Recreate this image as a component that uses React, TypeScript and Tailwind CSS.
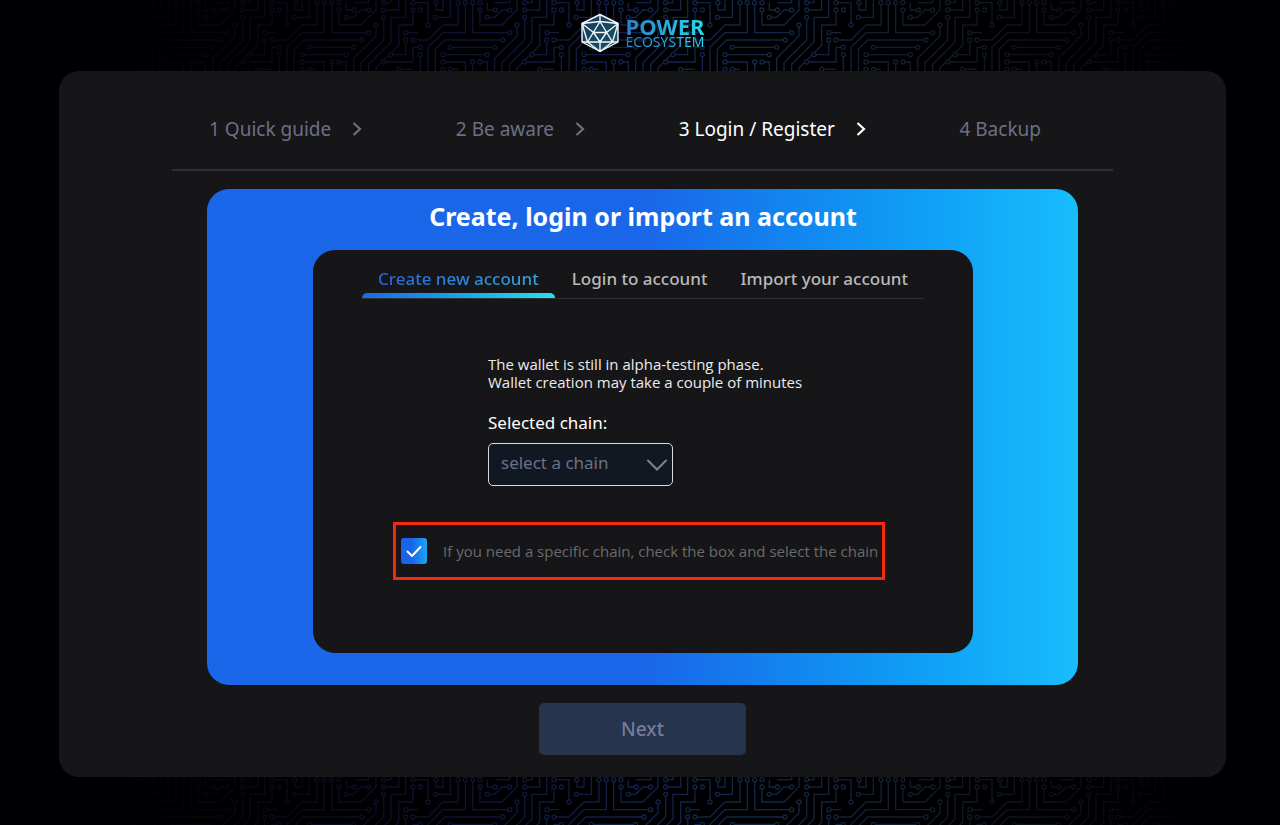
import { useState } from "react";

const traces = [
  "M408 8H453V75", "M475 8V30H498V0", "M475 52H520V0", "M54 8V30H75V0", "M30 75V8H0",
  "M52 52H97V0", "M120 8V75H75L30 120H0", "M142 8V98H75L30 142V216", "M164 8V98H275",
  "M186 30V75H252L297 30V0", "M232 30H208V8", "M232 8H275V0", "M275 30H252L230 52H208",
  "M320 30H365V0", "M320 8H342V0", "M297 75V108L230 175V216", "M320 52V120L252 188V216",
  "M386 0V52H342V126L275 193V216", "M408 30V75H365V136L297 204V216", "M430 30V98H387",
  "M386 120V164H342", "M408 120H423", "M430 142H408V186H320", "M430 164V216M7 164V216",
  "M255 120H80L52 148V216", "M97 142H230", "M75 164H208", "M75 186H142V216",
  "M164 186V216", "M186 186H208V216", "M97 208H120", "M365 208H408",
];

const pads = [
  [408, 8], [54, 8], [30, 75], [52, 52], [120, 8], [142, 8], [164, 8], [186, 8], [275, 98],
  [186, 30], [232, 30], [275, 30], [208, 52], [320, 8], [320, 30], [297, 75], [320, 52],
  [408, 30], [7, 30], [387, 98], [386, 120], [342, 164], [408, 120], [7, 142], [7, 164],
  [320, 186], [255, 120], [97, 142], [230, 142], [75, 164], [208, 164], [75, 186],
  [164, 186], [186, 186], [97, 208], [75, 208], [365, 208],
];

function Circuit({ id }: { id: string }) {
  return (
    <svg className="absolute inset-0 h-full w-full" aria-hidden="true">
      <defs>
        <pattern id={`${id}-tile`} x="136" y="0" width="141" height="72" patternUnits="userSpaceOnUse">
          <g transform="scale(0.3333)" fill="none" stroke="#fff" strokeWidth="4">
            {traces.map((d) => (
              <path key={d} d={d} />
            ))}
            {pads.map(([x, y]) => (
              <circle key={`${x}-${y}`} cx={x} cy={y} r="6" fill="#000" />
            ))}
          </g>
        </pattern>
        <mask id={`${id}-mask`}>
          <rect width="100%" height="100%" fill={`url(#${id}-tile)`} />
        </mask>
        <linearGradient id={`${id}-ink`}>
          <stop offset="0.08" stopColor="#000003" />
          <stop offset="0.2" stopColor="#080814" />
          <stop offset="0.38" stopColor="#101334" />
          <stop offset="0.5" stopColor="#11224c" />
          <stop offset="0.6" stopColor="#122744" />
          <stop offset="0.74" stopColor="#121a24" />
          <stop offset="0.86" stopColor="#0a0c10" />
          <stop offset="0.94" stopColor="#000003" />
        </linearGradient>
      </defs>
      <rect width="100%" height="100%" fill={`url(#${id}-ink)`} mask={`url(#${id}-mask)`} />
    </svg>
  );
}

function LogoMark() {
  return (
    <svg className="h-10 w-10" viewBox="0 0 40 40" fill="none" stroke="#f3f8fb" strokeWidth="1.4" strokeLinejoin="round" aria-hidden="true">
      <defs>
        <linearGradient id="gem" x1="0" y1="0" x2="1" y2="1">
          <stop stopColor="#163a5c" />
          <stop offset="1" stopColor="#175468" />
        </linearGradient>
      </defs>
      <path d="M20 1.500L38 10.500V29L20 38.500L2 29V10.500Z" fill="url(#gem)" />
      <path d="M20 8.500L32.500 29H7.500Z" />
      <path d="M20 1.500V8.500M2 10.500L20 8.500L38 10.500M2 10.500L7.500 29H2M38 10.500L32.500 29H38M7.500 29L20 38.500L32.500 29M20 29V38.500M2 10.500L13.500 19.500H26.500L38 10.500M13.500 19.500L20 29L26.500 19.500" />
    </svg>
  );
}

function Chevron() {
  return (
    <svg className="h-4 w-3" viewBox="0 0 12 16" fill="none" stroke="currentColor" strokeWidth="2.2" aria-hidden="true">
      <path d="M2.500 2L9 8L2.500 14" />
    </svg>
  );
}

const steps = ["1 Quick guide", "2 Be aware", "3 Login / Register", "4 Backup"];
const tabs = ["Create new account", "Login to account", "Import your account"];

export default function App() {
  const [tab, setTab] = useState(0);
  const [specific, setSpecific] = useState(true);

  return (
    <div className="flex min-h-screen flex-col bg-[#000003] font-['Noto_Sans',sans-serif] text-white">
      <header className="relative flex h-[71px] items-center justify-center pb-1.5 pl-1">
        <Circuit id="top" />
        <a href="#" className="relative flex items-center gap-1.5">
          <LogoMark />
          <span className="flex flex-col bg-linear-to-r from-[#2a7fc4] to-[#2ad8ec] bg-clip-text text-transparent">
            <span className="text-[22px] leading-[18px] font-bold">POWER</span>
            <span className="text-sm leading-[14px]">ECOSYSTEM</span>
          </span>
        </a>
      </header>

      <main className="mr-[54px] ml-[59px] flex flex-col items-center rounded-[20px] bg-[#161618] px-[113px] pb-[22px]">
        <ol className="flex h-[100px] w-full items-center justify-between border-b-2 border-[#303138] pt-[18px] pr-[72px] pl-[37px] text-[19px] text-[#6c7086]">
          {steps.map((step, i) => (
            <li key={step} className={i === 2 ? "flex items-center gap-5 text-white" : "flex items-center gap-5"} aria-current={i === 2 ? "step" : undefined}>
              {step}
              {i < 3 && <Chevron />}
            </li>
          ))}
        </ol>

        <div className="mt-[18px] w-full px-[35px]">
          <section className="rounded-[22px] bg-linear-to-r from-[#1b67ea] via-[#1a66e8] via-50% to-[#18bdfc] pr-[105px] pl-[106px] pb-8">
            <h1 className="flex h-[61px] items-center justify-center pb-1.5 text-[25px] font-bold whitespace-nowrap">
              Create, login or import an account
            </h1>
            <div className="rounded-[22px] bg-[#161618] pb-[73px]">
              <div role="tablist" className="mx-[49px] flex h-[49px] justify-between border-b border-[#303134]">
                {tabs.map((name, i) => (
                  <button
                    key={name}
                    type="button"
                    role="tab"
                    aria-selected={tab === i}
                    onClick={() => setTab(i)}
                    className="flex flex-col justify-end text-[17px] font-medium whitespace-nowrap text-[#b9b9bb]"
                  >
                    <span className={tab === i ? "mx-4 bg-linear-to-r from-[#2c63d8] to-[#2fa4e2] bg-clip-text pb-0.5 text-transparent" : "mx-4 pb-0.5"}>
                      {name}
                    </span>
                    <span className={tab === i ? "h-[5px] w-full rounded-t-md bg-linear-to-r from-[#1f66e5] to-[#2be0ea]" : "h-[5px] w-full"} />
                  </button>
                ))}
              </div>

              <div className="ml-[175px] pt-14">
                <p className="font-['Open_Sans',sans-serif] text-[15px] leading-[18px] text-[#ececee]">
                  The wallet is still in alpha-testing phase.
                  <br />
                  Wallet creation may take a couple of minutes
                </p>
                <label htmlFor="chain" className="mt-5 block text-[17px] leading-6">
                  Selected chain:
                </label>
                <div className="mt-2 grid w-[185px] items-center text-[#6c7282]">
                  <select id="chain" defaultValue="" className="col-start-1 row-start-1 h-[43px] appearance-none rounded-[5px] border border-[#d8dce0] bg-[#111822] px-3 pb-1 text-[17px]">
                    <option value="">select a chain</option>
                  </select>
                  <svg className="pointer-events-none col-start-1 row-start-1 mr-1.5 h-3 w-5 justify-self-end" viewBox="0 0 20 12" fill="none" stroke="#7d828c" strokeWidth="2" strokeLinecap="round" aria-hidden="true">
                    <path d="M1 1.500L10 10.500L19 1.500" />
                  </svg>
                </div>
              </div>

              <div className="mt-9 mr-[88px] ml-20 flex h-[58px] items-center gap-4 border-3 border-[#f32a13] px-[5px]">
                <span className="grid place-items-center">
                  <input
                    id="specific"
                    type="checkbox"
                    checked={specific}
                    onChange={(e) => setSpecific(e.target.checked)}
                    className="col-start-1 row-start-1 h-[26px] w-[26px] appearance-none rounded-[3px] bg-linear-to-r from-[#1a64ea] from-40% to-[#20a4f5]"
                  />
                  {specific && (
                    <svg className="pointer-events-none col-start-1 row-start-1 h-4 w-4" viewBox="0 0 16 16" fill="none" stroke="#fff" strokeWidth="2" strokeLinecap="round" strokeLinejoin="round" aria-hidden="true">
                      <path d="M1.500 8.500L6 13L14.500 4" />
                    </svg>
                  )}
                </span>
                <label htmlFor="specific" className="font-['Open_Sans',sans-serif] text-[15px] whitespace-nowrap text-[#6a6a6e]">
                  If you need a specific chain, check the box and select the chain
                </label>
              </div>
            </div>
          </section>
        </div>

        <button type="button" disabled className="mt-[18px] h-[52px] w-[207px] rounded-[5px] bg-[#26344d] text-[19px] font-medium text-[#777a9c]">
          Next
        </button>
      </main>

      <footer className="relative min-h-12 flex-1">
        <Circuit id="bottom" />
      </footer>
    </div>
  );
}
